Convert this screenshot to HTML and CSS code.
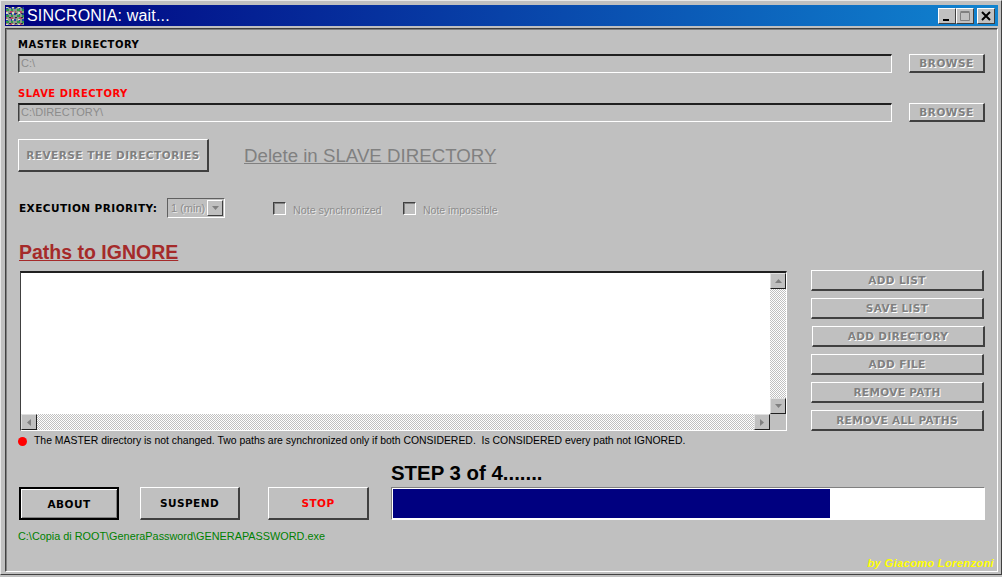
FILE: index.html
```html
<!DOCTYPE html>
<html lang="en">
<head>
<meta charset="utf-8">
<title>SINCRONIA: wait...</title>
<link rel="stylesheet" href="styles.css">
</head>
<body>
<div class="window">
  <header class="titlebar">
    <svg class="app-icon" width="18" height="18" viewBox="0 0 18 18" aria-hidden="true">
      <rect width="18" height="18" fill="#8a9a8a"/>
      <g stroke-width="2" fill="none">
        <path d="M0 1H18M0 7H18M0 13H18" stroke="#1f3fae" stroke-dasharray="2 3 1 2"/>
        <path d="M0 3H18M0 9H18M0 15H18" stroke="#2e9a4a" stroke-dasharray="3 2 2 4"/>
        <path d="M0 5H18M0 11H18M0 17H18" stroke="#b5486a" stroke-dasharray="1 3 3 2"/>
        <path d="M1 0V18M7 0V18M13 0V18" stroke="#d8d8c0" stroke-dasharray="1 4 2 5"/>
        <path d="M4 0V18M10 0V18M16 0V18" stroke="#2a2a50" stroke-dasharray="1 5 1 3"/>
      </g>
    </svg>
    <span class="title-text">SINCRONIA: wait...</span>
    <div class="win-controls">
      <span class="win-btn"><svg width="12" height="12" viewBox="0 0 12 12"><rect x="2" y="9" width="6" height="2" fill="#000"/></svg></span>
      <span class="win-btn"><svg width="12" height="12" viewBox="0 0 12 12"><path d="M1.5 2.5h9v8h-9zM1.5 1.5h9" fill="none" stroke="#808080"/></svg></span>
      <span class="win-btn win-close"><svg width="12" height="12" viewBox="0 0 12 12"><path d="M2 2l8 8M10 2l-8 8" stroke="#000" stroke-width="2" fill="none"/></svg></span>
    </div>
  </header>

  <main class="frame">
    <section class="dir-block">
      <label class="dir-label">MASTER DIRECTORY</label>
      <div class="dir-row">
        <div class="field">C:\</div>
        <button class="btn btn-browse" disabled>BROWSE</button>
      </div>
    </section>
    <section class="dir-block dir-slave">
      <label class="dir-label dir-label-red">SLAVE DIRECTORY</label>
      <div class="dir-row">
        <div class="field">C:\DIRECTORY\</div>
        <button class="btn btn-browse" disabled>BROWSE</button>
      </div>
    </section>

    <div class="reverse-row">
      <button class="btn btn-reverse" disabled>REVERSE THE DIRECTORIES</button>
      <span class="delete-link">Delete in SLAVE DIRECTORY</span>
    </div>

    <div class="priority-row">
      <span class="priority-label">EXECUTION PRIORITY:</span>
      <div class="select">
        <span class="select-value">1 (min)</span>
        <span class="select-arrow"><svg width="7" height="4" viewBox="0 0 7 4"><path d="M0 0h7L3.5 4z" fill="#808080"/></svg></span>
      </div>
      <span class="check check-first"></span><span class="check-text">Note synchronized</span>
      <span class="check check-second"></span><span class="check-text">Note impossible</span>
    </div>

    <h2 class="ignore-title">Paths to IGNORE</h2>

    <div class="paths-row">
      <div class="listbox">
        <div class="list-main">
          <div class="list-area"></div>
          <div class="vscroll">
            <span class="sb-btn"><svg width="7" height="4" viewBox="0 0 7 4"><path d="M0 4h7L3.5 0z" fill="#808080"/></svg></span>
            <span class="sb-btn"><svg width="7" height="4" viewBox="0 0 7 4"><path d="M0 0h7L3.5 4z" fill="#808080"/></svg></span>
          </div>
        </div>
        <div class="hscroll">
          <span class="sb-btn"><svg width="4" height="7" viewBox="0 0 4 7"><path d="M4 0v7L0 3.5z" fill="#808080"/></svg></span>
          <span class="sb-btn"><svg width="4" height="7" viewBox="0 0 4 7"><path d="M0 0v7l4-3.5z" fill="#808080"/></svg></span>
          <span class="sb-corner"></span>
        </div>
      </div>
      <div class="side-buttons">
        <button class="btn btn-side" disabled>ADD LIST</button>
        <button class="btn btn-side" disabled>SAVE LIST</button>
        <button class="btn btn-side btn-nudge" disabled>ADD DIRECTORY</button>
        <button class="btn btn-side" disabled>ADD FILE</button>
        <button class="btn btn-side" disabled>REMOVE PATH</button>
        <button class="btn btn-side" disabled>REMOVE ALL PATHS</button>
      </div>
    </div>

    <p class="note"><span class="dot"></span>The MASTER directory is not changed. Two paths are synchronized only if both CONSIDERED.&nbsp; Is CONSIDERED every path not IGNORED.</p>

    <div class="bottom-row">
      <div class="actions">
        <button class="btn btn-action btn-default">ABOUT</button>
        <button class="btn btn-action btn-suspend">SUSPEND</button>
        <button class="btn btn-action btn-stop">STOP</button>
      </div>
      <div class="progress-block">
        <div class="step">STEP 3 of 4.......</div>
        <div class="progress"><div class="progress-fill" style="width:74%"></div></div>
      </div>
    </div>

    <div class="footer-path">C:\Copia di ROOT\GeneraPassword\GENERAPASSWORD.exe</div>
    <div class="credit">by Giacomo Lorenzoni</div>
  </main>
</div>
</body>
</html>
```
FILE: styles.css
```css
* { box-sizing: border-box; }
html, body { margin: 0; height: 100%; overflow: hidden; }
body { background: #c0c0c0; font-family: "Liberation Sans", Arial, sans-serif; }

.window {
  width: 1002px;
  height: 575px;
  padding: 4px 3px 2px 4px;
  background: #c0c0c0;
  border-top: 1px solid #e8e8e8;
  border-left: 1px solid #e8e8e8;
  border-right: 1px solid #404040;
  border-bottom: 1px solid #404040;
  display: flex;
  flex-direction: column;
}

.titlebar {
  height: 21px;
  flex: none;
  display: flex;
  align-items: center;
  padding: 0 3px 0 1px;
  background: linear-gradient(90deg, #000080, #1084d0);
  color: #fff;
}
.app-icon { flex: none; margin-right: 3px; }
.title-text { font-size: 16px; line-height: 20px; letter-spacing: .18px; }
.win-controls { margin-left: auto; display: flex; }
.win-btn {
  width: 18px;
  height: 16px;
  display: flex;
  align-items: center;
  justify-content: center;
  background: #c0c0c0;
  border: 1px solid;
  border-color: #fff #404040 #404040 #fff;
}
.win-close { margin-left: 3px; }

.frame {
  flex: 1;
  margin-top: 2px;
  padding: 0 0 0 12px;
  border: 1px solid;
  border-color: #404040 #fff #fff #404040;
  box-shadow: inset 1px 1px 0 #808080;
  position: relative;
  min-height: 0;
}

.btn {
  background: #c0c0c0;
  border: 1px solid;
  border-color: #fff #404040 #404040 #fff;
  border-width: 1px 2px 2px 1px;
  padding: 0;
  font-family: "DejaVu Sans", sans-serif;
  font-weight: 700;
  font-size: 10.5px;
  letter-spacing: .5px;
  color: #000;
}
.btn:disabled {
  color: #808080;
  text-shadow: 1px 1px 0 #fff;
}

.dir-block { padding-top: 9px; }
.dir-slave { padding-top: 14px; }
.dir-label {
  display: block;
  height: 16px;
  font-family: "DejaVu Sans", sans-serif;
  font-weight: 700;
  font-size: 10px;
  line-height: 14px;
  letter-spacing: .5px;
  color: #000;
}
.dir-label-red { color: #f00; }
.dir-row { display: flex; align-items: stretch; height: 19px; }
.field {
  width: 874px;
  background: #c0c0c0;
  border: 1px solid;
  border-width: 2px 1px 1px 1px;
  border-color: #202020 #fff #fff #404040;
  box-shadow: inset 1px 0 0 #808080;
  padding-left: 2px;
  font-size: 11px;
  line-height: 15px;
  letter-spacing: .05px;
  color: #8c8c8c;
}
.btn-browse { width: 76px; margin-left: 17px; }

.reverse-row { display: flex; align-items: center; margin-top: 17px; height: 33px; }
.btn-reverse { width: 191px; height: 33px; font-size: 10.5px; letter-spacing: .5px; }
.delete-link {
  margin-left: 35px;
  font-size: 18.7px;
  color: #808080;
  text-decoration: underline;
}

.priority-row { display: flex; align-items: center; margin-top: 26px; height: 20px; padding-left: 1px; }
.priority-label {
  width: 148px;
  font-family: "DejaVu Sans", sans-serif;
  font-weight: 700;
  font-size: 10.5px;
  letter-spacing: .45px;
  color: #000;
}
.select {
  width: 58px;
  height: 20px;
  display: flex;
  align-items: center;
  justify-content: space-between;
  border: 1px solid;
  border-color: #606060 #fff #fff #606060;
  padding: 0 1px 0 3px;
}
.select-value { font-size: 11px; color: #8c8c8c; text-shadow: 1px 1px 0 #e8e8e8; }
.select-arrow {
  width: 16px;
  height: 16px;
  display: flex;
  align-items: center;
  justify-content: center;
  border: 1px solid;
  border-color: #fff #404040 #404040 #fff;
}
.check {
  width: 13px;
  height: 13px;
  flex: none;
  border: 1px solid;
  border-color: #404040 #fff #fff #404040;
  box-shadow: inset 1px 1px 0 #808080;
}
.check-first { margin-left: 48px; }
.check-second { margin-left: 21px; }
.check-text {
  width: 89px;
  margin: 3px 0 0 7px;
  font-size: 10.7px;
  white-space: nowrap;
  color: #8c8c8c;
  text-shadow: 1px 1px 0 #e8e8e8;
}
.check-second + .check-text { width: auto; font-size: 10.5px; }

.ignore-title {
  margin: 22px 0 0 1px;
  height: 24px;
  font-size: 19.5px;
  line-height: 24px;
  font-weight: 700;
  color: #a52a2a;
  text-decoration: underline;
}

.paths-row { display: flex; margin-top: 6px; height: 161px; }
.listbox {
  width: 767px;
  height: 160px;
  margin: 1px 0 0 2px;
  display: flex;
  flex-direction: column;
  border: 1px solid;
  border-width: 2px 1px 1px 1px;
  border-color: #202020 #fff #fff #404040;
  background: #fff;
}
.list-main { flex: 1; display: flex; min-height: 0; }
.list-area { flex: 1; background: #fff; }
.vscroll, .hscroll {
  display: flex;
  justify-content: space-between;
  background: repeating-conic-gradient(#c0c0c0 0 25%, #fff 0 50%) 0 0 / 2px 2px;
}
.vscroll { width: 16px; flex-direction: column; }
.hscroll { height: 16px; padding-right: 16px; position: relative; }
.sb-btn {
  width: 16px;
  height: 16px;
  display: flex;
  align-items: center;
  justify-content: center;
  background: #c0c0c0;
  border: 1px solid;
  border-color: #e0e0e0 #202020 #202020 #e0e0e0;
}
.sb-corner { position: absolute; right: 0; top: 0; width: 16px; height: 16px; background: #c0c0c0; }

.side-buttons { margin-left: 24px; display: flex; flex-direction: column; gap: 7px; }
.btn-side { width: 173px; height: 21px; letter-spacing: .35px; }
.btn-nudge { transform: translateX(1px); }

.note { margin: 3px 0 0; height: 14px; font-size: 10.43px; line-height: 14px; color: #000; display: flex; align-items: center; white-space: pre; }
.dot { width: 9px; height: 9px; border-radius: 50%; background: #f00; margin: 0 7px 0 0; flex: none; }

.bottom-row { display: flex; margin-top: 12px; }
.actions { display: flex; align-items: flex-end; width: 373px; padding-left: 1px; }
.btn-action { width: 100px; height: 33px; font-size: 10.5px; letter-spacing: .45px; }
.btn-default { border: 2px solid #000; box-shadow: inset 1px 1px 0 #fff, inset -1px -1px 0 #808080; }
.btn-suspend { margin-left: 21px; }
.btn-stop { margin-left: 28px; width: 101px; color: #f00; }
.progress-block { width: 594px; }
.step { height: 27px; font-size: 20.4px; line-height: 26px; font-weight: 700; color: #000; }
.progress {
  height: 33px;
  background: #fff;
  border: 1px solid;
  border-color: #808080 #fff #fff #808080;
  padding: 1px;
}
.progress-fill { height: 100%; background: #000080; }

.footer-path { margin-top: 9px; font-size: 10.86px; line-height: 15px; color: #008000; }
.credit {
  position: absolute;
  right: 3px;
  bottom: 2px;
  font-size: 11px;
  font-weight: 700;
  font-style: italic;
  letter-spacing: .4px;
  color: #ffff00;
}
```
